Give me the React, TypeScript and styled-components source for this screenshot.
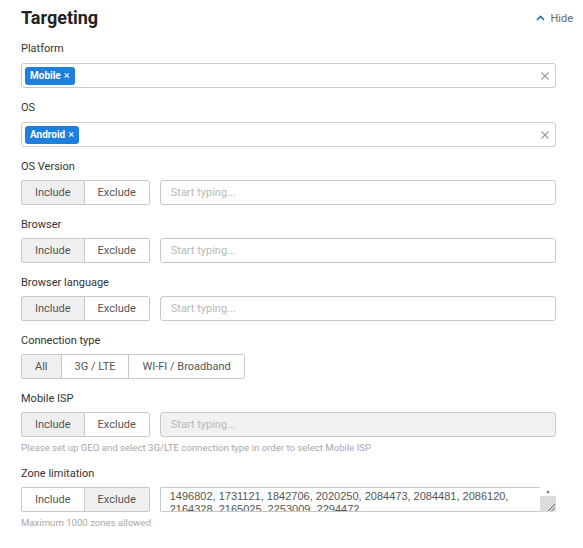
import React, { FC } from "react";
import styled, { createGlobalStyle } from "styled-components";

const GlobalStyle = createGlobalStyle`
  html, body {
    margin: 0;
    padding: 0;
    background: #fff;
  }

  body {
    font-family: Roboto, "Liberation Sans", Arial, sans-serif;
    color: #333;
  }

  * {
    box-sizing: border-box;
  }
`;

const ZONES =
  "1496802, 1731121, 1842706, 2020250, 2084473, 2084481, 2086120, 2164328, 2165025, 2253009, 2294472";

const ChevronUp: FC = () => (
  <svg width="9" height="6" viewBox="0 0 9 6" fill="none">
    <polyline points="1,5 4.5,1.5 8,5" stroke="#1f6fb5" strokeWidth="1.6" />
  </svg>
);

const CrossIcon: FC = () => (
  <svg width="8" height="8" viewBox="0 0 8 8" fill="none">
    <path d="M0.5 0.5 L7.5 7.5 M7.5 0.5 L0.5 7.5" stroke="#9a9a9a" strokeWidth="1.1" />
  </svg>
);

type TagFieldProps = { label: string; tag: string };

const TagField: FC<TagFieldProps> = ({ label, tag }) => (
  <Field>
    <Label>{label}</Label>
    <TagSelect>
      <Chip>
        {tag} <span>×</span>
      </Chip>
      <ClearButton>
        <CrossIcon />
      </ClearButton>
    </TagSelect>
  </Field>
);

type IncludeFieldProps = {
  label: string;
  exclude?: boolean;
  disabled?: boolean;
  hint?: string;
};

const IncludeField: FC<IncludeFieldProps> = ({ label, exclude, disabled, hint }) => (
  <Field>
    <Label>{label}</Label>
    <ControlRow>
      <Segmented>
        <Segment $active={!exclude}>Include</Segment>
        <Segment $active={!!exclude}>Exclude</Segment>
      </Segmented>
      <TextInput placeholder="Start typing..." disabled={disabled} $disabled={disabled} />
    </ControlRow>
    {hint && <Hint>{hint}</Hint>}
  </Field>
);

const App: FC = () => {
  return (
    <Panel>
      <GlobalStyle />
      <Header>
        <Title>Targeting</Title>
        <HideToggle>
          <ChevronUp />
          Hide
        </HideToggle>
      </Header>

      <TagField label="Platform" tag="Mobile" />
      <TagField label="OS" tag="Android" />
      <IncludeField label="OS Version" />
      <IncludeField label="Browser" />
      <IncludeField label="Browser language" />

      <Field>
        <Label>Connection type</Label>
        <ControlRow>
          <Segmented>
            <Segment $active>All</Segment>
            <Segment>3G / LTE</Segment>
            <Segment>WI-FI / Broadband</Segment>
          </Segmented>
        </ControlRow>
      </Field>

      <IncludeField
        label="Mobile ISP"
        disabled
        hint="Please set up GEO and select 3G/LTE connection type in order to select Mobile ISP"
      />

      <Field>
        <Label>Zone limitation</Label>
        <ControlRow>
          <Segmented>
            <Segment>Include</Segment>
            <Segment $active>Exclude</Segment>
          </Segmented>
          <ZoneBox>
            <ZoneText readOnly value={ZONES} />
            <ScrollRail>
              <ScrollArrow>▲</ScrollArrow>
              <ResizeGrip>
                <svg width="8" height="8" viewBox="0 0 8 8">
                  <path d="M1 8 L8 1 M4.5 8 L8 4.5" stroke="#555" strokeWidth="0.9" />
                </svg>
              </ResizeGrip>
            </ScrollRail>
          </ZoneBox>
        </ControlRow>
        <Hint>Maximum 1000 zones allowed</Hint>
      </Field>
    </Panel>
  );
};

const Panel = styled.div`
  width: 583px;
  padding: 6px 27px 0 21px;
`;

const Header = styled.div`
  display: flex;
  justify-content: space-between;
  align-items: center;
  height: 24px;
  margin-bottom: 11px;
`;

const Title = styled.h2`
  margin: 0;
  font-size: 18px;
  line-height: 24px;
  font-weight: 700;
  color: #222;
`;

const HideToggle = styled.div`
  display: flex;
  align-items: center;
  gap: 5px;
  margin-right: -17px;
  font-size: 11px;
  color: #666;
`;

const Field = styled.div`
  display: flex;
  flex-direction: column;
  margin-bottom: 12px;
`;

const Label = styled.div`
  font-size: 11px;
  line-height: 16px;
  color: #333;
  margin-bottom: 5px;
`;

const TagSelect = styled.div`
  display: flex;
  align-items: center;
  justify-content: space-between;
  height: 25px;
  margin-top: 1px;
  padding: 0 6px 0 3px;
  border: 1px solid #cacaca;
  border-radius: 3px;
`;

const Chip = styled.div`
  display: flex;
  align-items: center;
  gap: 3px;
  height: 18px;
  padding: 0 5px;
  border-radius: 3px;
  background: #1d80dc;
  color: #fff;
  font-size: 10px;
  font-weight: 700;

  span {
    font-weight: 400;
    font-size: 11px;
  }
`;

const ClearButton = styled.div`
  display: flex;
  align-items: center;
`;

const ControlRow = styled.div`
  display: flex;
  gap: 10px;
`;

const Segmented = styled.div`
  display: inline-flex;
  height: 25px;
  border: 1px solid #c8c8c8;
  border-radius: 2px;
`;

const Segment = styled.div<{ $active?: boolean }>`
  display: flex;
  align-items: center;
  padding: 0 13px;
  font-size: 11px;
  color: #555;
  background: ${(p) => (p.$active ? "#efefef" : "#fff")};

  & + & {
    border-left: 1px solid #c8c8c8;
  }
`;

const TextInput = styled.input<{ $disabled?: boolean }>`
  flex: 1;
  height: 25px;
  padding: 0 10px;
  border: 1px solid #c8c8c8;
  border-radius: 3px;
  font-family: inherit;
  font-size: 11px;
  color: #555;
  background: ${(p) => (p.$disabled ? "#f1f1f1" : "#fff")};
  outline: none;

  &::placeholder {
    color: #b8b8b8;
  }
`;

const Hint = styled.div`
  margin-top: 5px;
  font-size: 9.6px;
  line-height: 12px;
  color: #a8a8a8;
`;

const ZoneBox = styled.div`
  flex: 1;
  display: flex;
  height: 25px;
`;

const ZoneText = styled.textarea`
  flex: 1;
  height: 25px;
  padding: 2px 9px 0;
  border: 1px solid #c8c8c8;
  border-right: none;
  border-radius: 2px 0 0 2px;
  font-family: "Liberation Sans", Arial, sans-serif;
  font-size: 11px;
  line-height: 13px;
  color: #555;
  resize: none;
  overflow: hidden;
  outline: none;
`;

const ScrollRail = styled.div`
  display: flex;
  flex-direction: column;
  width: 16px;
  background: #fff;
`;

const ScrollArrow = styled.div`
  height: 9px;
  font-size: 5px;
  line-height: 9px;
  text-align: center;
  color: #666;
`;

const ResizeGrip = styled.div`
  flex: 1;
  display: flex;
  align-items: flex-end;
  justify-content: flex-end;
  padding: 0 1px 1px 0;
  background-color: #dcdcdc;
  background-image: radial-gradient(#c4c4c4 0.6px, transparent 0.6px);
  background-size: 2px 2px;
`;

export default App;
